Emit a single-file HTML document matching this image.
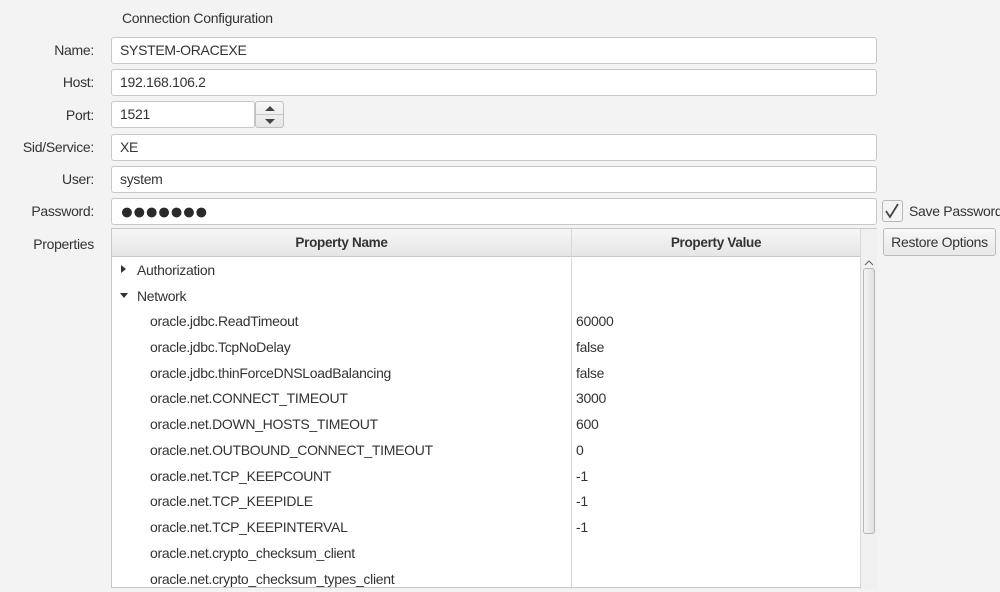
<!DOCTYPE html>
<html><head><style>
body{margin:0;width:1000px;height:584px;background:#f3f3f3;font-family:"Liberation Sans",sans-serif;font-size:14px;letter-spacing:-0.3px;color:#333;overflow:hidden;position:relative}
.a{position:absolute;white-space:nowrap}
.lbl{position:absolute;right:906px;text-align:right;white-space:nowrap}
.tf{position:absolute;left:111px;width:766px;height:27px;background:#fff;border:1px solid #c8c8c8;border-radius:3px;box-sizing:border-box;padding-left:8px;line-height:25px}
.row{position:absolute;left:112px;height:26px;line-height:26px;white-space:nowrap}
</style></head><body>
<div class="a" style="left:122px;top:10px">Connection Configuration</div>
<div class="lbl" style="top:42px">Name:</div>
<div class="tf" style="top:37px">SYSTEM-ORACEXE</div>
<div class="lbl" style="top:74px">Host:</div>
<div class="tf" style="top:69px">192.168.106.2</div>
<div class="lbl" style="top:107px">Port:</div>
<div class="tf" style="top:101px;width:144px">1521</div>
<div class="a" style="left:255px;top:101px;width:29px;height:27px;border:1px solid #c0c0c0;border-radius:3px;box-sizing:border-box;background:linear-gradient(#f8f8f8,#e6e6e6)">
<div class="a" style="left:0;top:12px;width:27px;border-top:1px solid #c8c8c8"></div>
<svg class="a" style="left:8px;top:3px" width="12" height="20"><path d="M1 6 L6 1 L11 6Z M1 14 L11 14 L6 19Z" fill="#444"/></svg></div>
<div class="lbl" style="top:139px">Sid/Service:</div>
<div class="tf" style="top:134px">XE</div>
<div class="lbl" style="top:171px">User:</div>
<div class="tf" style="top:166px">system</div>
<div class="lbl" style="top:203px">Password:</div>
<div class="tf" style="top:198px;font-size:23px;letter-spacing:-1.5px;line-height:24px;color:#2a2a2a">●●●●●●●</div>
<div class="a" style="left:882px;top:200px;width:21px;height:22px;border:1px solid #b8b8b8;border-radius:3px;box-sizing:border-box;background:#f4f4f4">
<svg width="19" height="20"><path d="M3 10 L7 16 L15 3" stroke="#444" stroke-width="1.8" fill="none"/></svg></div>
<div class="a" style="left:909px;top:203px">Save Password</div>
<div class="a" style="left:883px;top:228px;width:113px;height:28px;border:1px solid #bcbcbc;border-radius:3px;box-sizing:border-box;background:linear-gradient(#f8f8f8,#e8e8e8);text-align:center;line-height:26px">Restore Options</div>
<div class="lbl" style="top:236px">Properties</div>
<div class="a" style="left:111px;top:228px;width:766px;height:360px;background:#fff;border:1px solid #c8c8c8;box-sizing:border-box"></div>
<div class="a" style="left:112px;top:229px;width:764px;height:27px;background:linear-gradient(#f6f6f6,#e6e6e6);border-bottom:1px solid #c8c8c8"></div>
<div class="a" style="left:571px;top:229px;height:360px;border-left:1px solid #d8d8d8"></div>
<div class="a" style="left:860px;top:229px;height:360px;border-left:1px solid #d8d8d8;width:16px;background:#f0f0f0"></div>
<div class="a" style="left:112px;top:235px;width:459px;text-align:center;font-weight:bold;font-size:13.5px">Property Name</div>
<div class="a" style="left:572px;top:235px;width:288px;text-align:center;font-weight:bold;font-size:13.5px">Property Value</div>
<svg class="a" style="left:862px;top:258px" width="14" height="10"><path d="M3 7 L7 3 L11 7" stroke="#666" fill="none"/></svg>
<div class="a" style="left:863px;top:268px;width:12px;height:266px;border:1px solid #b8b8b8;border-radius:3px;box-sizing:border-box;background:linear-gradient(90deg,#f4f4f4,#e0e0e0)"></div>
<svg class="a" style="left:119px;top:264px" width="10" height="40"><path d="M2 1 L7 5 L2 9Z M1 29 L9 29 L5 34Z" fill="#333"/></svg>
<div class="row" style="top:257px;left:137px">Authorization</div>
<div class="row" style="top:283px;left:137px">Network</div>
<div class="row" style="top:308px;left:150px">oracle.jdbc.ReadTimeout</div><div class="row" style="top:308px;left:576px">60000</div>
<div class="row" style="top:334px;left:150px">oracle.jdbc.TcpNoDelay</div><div class="row" style="top:334px;left:576px">false</div>
<div class="row" style="top:360px;left:150px">oracle.jdbc.thinForceDNSLoadBalancing</div><div class="row" style="top:360px;left:576px">false</div>
<div class="row" style="top:385px;left:150px">oracle.net.CONNECT_TIMEOUT</div><div class="row" style="top:385px;left:576px">3000</div>
<div class="row" style="top:411px;left:150px">oracle.net.DOWN_HOSTS_TIMEOUT</div><div class="row" style="top:411px;left:576px">600</div>
<div class="row" style="top:437px;left:150px">oracle.net.OUTBOUND_CONNECT_TIMEOUT</div><div class="row" style="top:437px;left:576px">0</div>
<div class="row" style="top:463px;left:150px">oracle.net.TCP_KEEPCOUNT</div><div class="row" style="top:463px;left:576px">-1</div>
<div class="row" style="top:488px;left:150px">oracle.net.TCP_KEEPIDLE</div><div class="row" style="top:488px;left:576px">-1</div>
<div class="row" style="top:514px;left:150px">oracle.net.TCP_KEEPINTERVAL</div><div class="row" style="top:514px;left:576px">-1</div>
<div class="row" style="top:540px;left:150px">oracle.net.crypto_checksum_client</div>
<div class="row" style="top:566px;left:150px">oracle.net.crypto_checksum_types_client</div>
</body></html>
